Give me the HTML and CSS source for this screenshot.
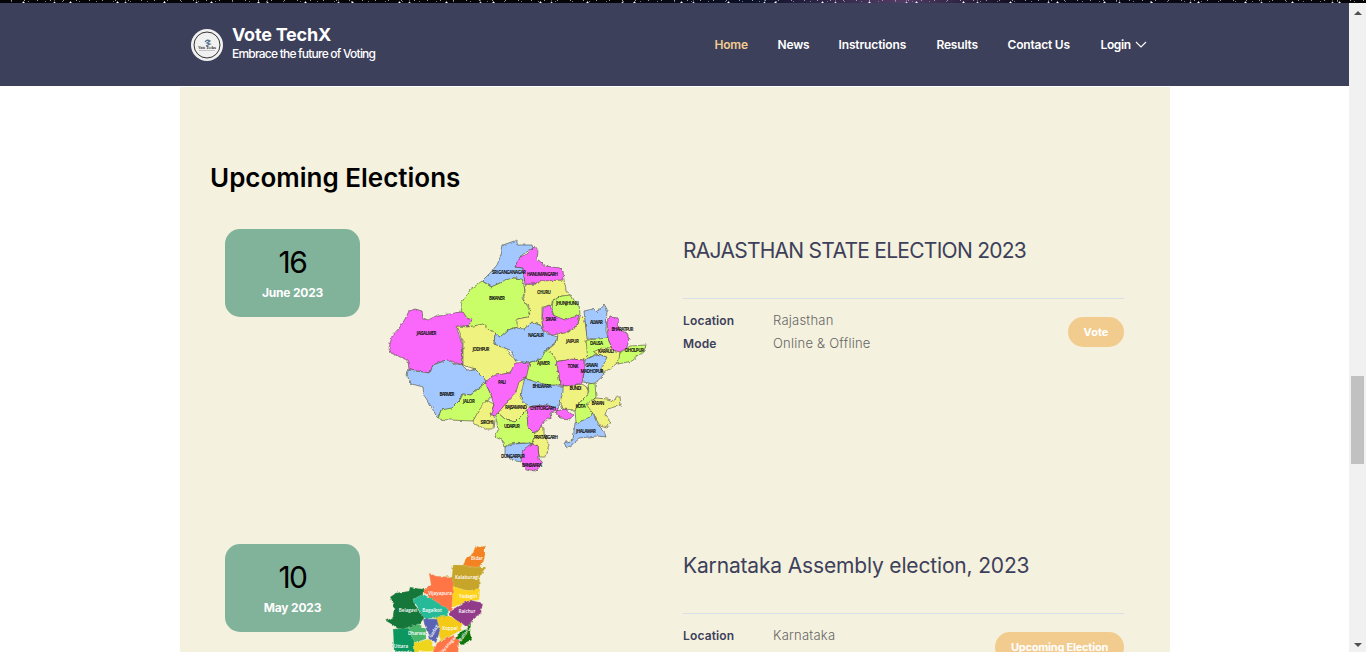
FILE: index.html
```html
<!DOCTYPE html>
<html lang="en">
<head>
<meta charset="utf-8">
<title>Vote TechX</title>
<link rel="stylesheet" href="styles.css">
</head>
<body>
<div class="stars"></div>
<div class="viewport">
<div class="page">
<header class="header">
  <a class="brand">
    <svg class="logo" viewBox="0 0 32 32"><circle cx="16" cy="16" r="16" fill="#f1f1f1"/><circle cx="16" cy="16" r="13" fill="none" stroke="#333" stroke-width="1"/><path d="M14 13q2-3 5-1l-3 2 3 1-4 2" fill="none" stroke="#56758c" stroke-width="1.3"/><text x="16" y="20" text-anchor="middle" class="logo-text">Vote Techx</text><path d="M8 21.500h16" stroke="#999" stroke-width=".5"/></svg>
    <span class="brand-text"><strong class="brand-name">Vote TechX</strong><span class="tagline">Embrace the future of Voting</span></span>
  </a>
  <nav class="nav">
    <a class="active n1">Home</a><a class="n2">News</a><a class="n3">Instructions</a><a class="n4">Results</a><a class="n5">Contact Us</a><a class="n6">Login<svg class="chev" viewBox="0 0 12 8"><path d="M1 1l5 5 5-5" fill="none" stroke="#fff" stroke-width="1.100"/></svg></a>
  </nav>
</header>
<main class="section">
  <h1 class="heading"><span>Upcoming Elections</span></h1>
  <article class="event">
    <div class="date"><span class="day">16</span><span class="month">June 2023</span></div>
    <svg class="map" viewBox="380 229 275 250">
      <defs><filter id="rough" x="-5%" y="-5%" width="110%" height="110%"><feTurbulence type="fractalNoise" baseFrequency=".22" numOctaves="2" seed="4"/><feDisplacementMap in="SourceGraphic" scale="3.500" xChannelSelector="R" yChannelSelector="G"/></filter></defs>
      <g class="districts" filter="url(#rough)">
        <path class="b" d="M482 281L490 273 497 265 501 255 503 245 517 240 517 245 532 245 533 248 522 255 515 267 523 268 525 281 517 278 513 278 500 283 492 287Z"/>
        <path class="p" d="M532 249L535 246 538 250 537 259 546 266 560 268 563 271 564 280 557 281 548 282 540 281 535 284 525 284 523 268 515 267 517 262 521 257 527 254Z"/>
        <path class="g" d="M482 281L491 287 500 283 505 280 513 278 522 279 524 285 525 292 522 298 526 304 530 310 528 317 518 319 517 327 508 330 500 337 495 334 483 325 469 327 460 312 462 302 470 290Z"/>
        <path class="p" d="M460 312L450 314 438 315 428 320 423 318 422 311 415 309 409 311 405 319 400 327 392 336 389 348 391 353 400 357 408 360 409 370 430 373 433 365 447 360 463 365 462 340 457 330 460 325 468 327 472 320 467 318 463 312Z"/>
        <path class="y" d="M457 326L468 327 483 324 495 334 494 344 505 347 510 355 516 360 515 370 500 376 488 382 480 376 475 369 463 365 463 340Z"/>
        <path class="b" d="M408 370L430 373 433 365 447 360 452 363 462 365 467 370 475 369 484 378 486 382 479 388 470 395 462 394 460 400 452 409 441 410 438 419 432 408 424 395 423 387 412 384 407 376Z"/>
        <path class="g" d="M438 419L441 410 452 408 460 400 463 394 471 395 485 383 492 396 485 404 478 414 473 421 450 420Z"/>
        <path class="y" d="M473 421L478 412 486 400 494 404 492 410 495 420 494 429 485 429 475 424Z"/>
        <path class="p" d="M485 382L495 375 510 373 515 363 530 362 529 376 522 380 515 395 505 405 497 416 490 415 494 405 491 395Z"/>
        <path class="y" d="M498 413L507 402 516 392 519 382 526 378 521 398 530 406 535 412 525 412 515 422 506 420Z"/>
        <path class="g" d="M496 417L498 413 506 420 515 422 525 412 528 410 528 425 535 434 532 445 524 443 510 444 504 447 502 440 495 437 498 430Z"/>
        <path class="b" d="M505 447L513 444 530 443 530 450 521 455 520 462 515 461 505 455Z"/>
        <path class="y" d="M535 434L540 426 544 428 544 435 549 445 546 457 539 457 538 446 532 443Z"/>
        <path class="p" d="M524 450L532 444 538 446 539 458 542 464 536 471 525 469 521 460Z"/>
        <path class="p" d="M528 410L530 405 545 405 556 406 558 411 550 413 551 418 545 421 540 428 534 433 528 427 527 415Z"/>
        <path class="p" d="M556 411L565 409 573 415 570 419 560 418 557 415Z"/>
        <path class="y" d="M563 386L582 384 588 388 588 395 580 402 575 410 563 409 560 400Z"/>
        <path class="b" d="M521 398L522 389 525 379 540 382 558 386 563 386 563 392 560 402 558 409 548 405 530 406 524 403Z"/>
        <path class="g" d="M526 378L530 362 541 359 543 352 549 348 557 360 558 370 560 385 550 385 535 382Z"/>
        <path class="b" d="M495 334L500 337 508 330 517 327 525 328 532 322 542 326 544 333 558 337 556 343 546 350 541 359 528 363 516 360 510 350 494 344Z"/>
        <path class="y" d="M525 285L535 284 540 281 564 280 566 290 571 297 562 296 553 300 551 306 542 307 542 319 543 326 532 322 524 329 517 328 517 319 528 317 530 308 523 300 525 292Z"/>
        <path class="g" d="M553 300L562 296 571 295 575 302 579 305 580 314 577 317 565 320 555 318 552 310Z"/>
        <path class="y" d="M558 333L568 332 578 325 580 316 585 318 587 335 590 345 587 360 570 360 557 361 548 350 557 342Z"/>
        <path class="p" d="M543 308L550 305 553 315 565 320 579 315 578 325 565 333 552 335 544 331 542 322Z"/>
        <path class="b" d="M584 311L593 309 597 312 604 304 607 309 606 330 608 338 600 340 587 338Z"/>
        <path class="g" d="M586 340L608 338 612 350 605 355 595 354 588 360Z"/>
        <path class="y" d="M593 352L604 347 620 350 620 361 604 373 600 374 602 365 606 357Z"/>
        <path class="p" d="M607 322L610 317 618 318 619 330 627 333 629 340 627 347 620 352 612 350 608 338Z"/>
        <path class="g" d="M620 353L630 346 646 345 644 351 632 361 618 364Z"/>
        <path class="b" d="M585 360L598 354 607 357 602 368 604 375 594 384 583 382Z"/>
        <path class="p" d="M556 362L570 359 584 360 584 372 582 383 570 386 560 385 559 374Z"/>
        <path class="g" d="M575 410L582 400 589 394 588 384 595 383 596 397 590 403 594 412 590 417 585 422 576 423Z"/>
        <path class="y" d="M586 404L596 398 607 399 615 401 617 396 620 396 621 405 607 409 605 415 611 422 607 428 600 426 594 415Z"/>
        <path class="b" d="M575 423L585 420 593 414 598 425 604 431 606 437 597 436 580 438 573 444 567 448 564 443 573 440Z"/>
      </g>
      <g class="labels">
        <text x="509" y="274" textLength="34">SRI GANGANAGAR</text><text x="542.500" y="276" textLength="31">HANUMANGARH</text><text x="497" y="300" textLength="16">BIKANER</text><text x="544" y="293.500" textLength="14">CHURU</text><text x="567.500" y="305" textLength="23">JHUNJHUNU</text><text x="551" y="321" textLength="11">SIKAR</text><text x="596.500" y="323.500" textLength="13">ALWAR</text><text x="622.500" y="330.500" textLength="22">BHARATPUR</text><text x="426.500" y="335" textLength="20">JAISALMER</text><text x="481" y="350.500" textLength="17">JODHPUR</text><text x="536" y="336.500" textLength="16">NAGAUR</text><text x="572.500" y="343" textLength="13">JAIPUR</text><text x="596.500" y="345" textLength="13">DAUSA</text><text x="606" y="353" textLength="16">KARAULI</text><text x="634.500" y="352" textLength="19">DHOLPUR</text><text x="543.500" y="365" textLength="13">AJMER</text><text x="573" y="368" textLength="11">TONK</text><text x="592" y="367" textLength="12">SAWAI</text><text x="592" y="372.500" textLength="23">MADHOPUR</text><text x="502" y="384" textLength="8">PALI</text><text x="542" y="388" textLength="19">BHILWARA</text><text x="575.500" y="390" textLength="12">BUNDI</text><text x="447" y="396" textLength="15">BARMER</text><text x="469" y="403" textLength="12">JALOR</text><text x="516" y="409" textLength="22">RAJSAMAND</text><text x="543" y="410" textLength="26">CHITTORGARH</text><text x="580.500" y="407.500" textLength="10">KOTA</text><text x="598" y="405" textLength="13">BARAN</text><text x="487" y="424" textLength="13">SIROHI</text><text x="512" y="428" textLength="16">UDAIPUR</text><text x="546" y="438.500" textLength="24">PRATABGARH</text><text x="586" y="433" textLength="20">JHALAWAR</text><text x="513" y="458" textLength="24">DUNGARPUR</text><text x="532" y="466.500" textLength="20">BANSWARA</text>
      </g>
    </svg>
    <div class="info">
      <h2 class="title"><span class="t1">RAJASTHAN STATE ELECTION 2023</span></h2>
      <div class="details">
        <dl class="facts"><dt>Location</dt><dd class="d1">Rajasthan</dd><dt class="mode">Mode</dt><dd class="d2">Online &amp; Offline</dd></dl>
        <a class="btn vote">Vote</a>
      </div>
    </div>
  </article>
  <article class="event">
    <div class="date"><span class="day">10</span><span class="month">May 2023</span></div>
    <svg class="map" viewBox="380 544 275 250">
      <g transform="translate(-1 -1)"><g class="regions" filter="url(#rough)">
        <path fill="#f58220" d="M463 568L468 558 474 554 477 546 481 548 486 547 486 557 484 564 480 569 473 569Z"/>
        <path fill="#c7a52c" d="M454 566L463 566 475 568 487 568 481 577 480 591 470 592 456 590 445 578 453 577Z"/>
        <path fill="#ff7545" d="M430 574L437 577 452 578 454 585 455 600 452 612 443 609 432 600 424 592 432 586Z"/>
        <path fill="#ffd21e" d="M454 588L470 592 481 589 480 601 471 602 453 608Z"/>
        <path fill="#14773b" d="M391 598L397 594 410 592 411 588 424 590 424 596 416 600 416 606 426 618 420 626 410 629 402 632 394 626 387 622 394 618 395 605Z"/>
        <path fill="#26ba99" d="M415 600L424 595 433 600 449 610 450 618 443 619 426 620 416 604Z"/>
        <path fill="#923a8b" d="M451 612L464 604 471 601 484 604 482 614 474 620 470 628 460 624 451 616Z"/>
        <path fill="#f4ca16" d="M436 618L450 617 462 624 463 630 455 635 442 642 438 630Z"/>
        <path fill="#5964b4" d="M424 620L438 620 441 632 437 644 430 640 427 630Z"/>
        <path fill="#46b66c" d="M409 628L420 625 427 630 427 640 415 644 408 636Z"/>
        <path fill="#07750e" d="M472 623L471 634 473 641 463 646 455 642 460 633 468 630Z"/>
        <path fill="#109760" d="M394 630L409 629 416 644 416 672 400 668 395 652Z"/>
        <path fill="#efd51d" d="M415 644L430 640 436 648 434 670 416 670Z"/>
        <path fill="#ff7545" d="M434 653L438 644 455 636 460 642 458 670 436 670Z"/>
      </g></g>
      <g class="klabels"><text x="477" y="560">Bidar</text><text x="467" y="578.500">Kalaburagi</text><text x="440" y="594.500">Vijayapura</text><text x="468" y="598">Yadagiri</text><text x="408" y="612">Belagavi</text><text x="432" y="611.500">Bagalkot</text><text x="467" y="613">Raichur</text><text x="450" y="630">Koppal</text><text x="418" y="635">Dharwad</text><text transform="translate(435 632) rotate(-60)">Gadag</text><text transform="translate(465 636) rotate(-55)">Ballari</text><text x="401" y="648">Uttara</text><text x="402" y="654">Kannada</text><text x="426" y="653.500">Haveri</text><text transform="translate(449 646) rotate(-48)">Vijayanagara</text></g>
    </svg>
    <div class="info">
      <h2 class="title"><span class="t2">Karnataka Assembly election, 2023</span></h2>
      <div class="details">
        <dl class="facts"><dt>Location</dt><dd class="d3">Karnataka</dd></dl>
        <a class="btn upcoming">Upcoming Election</a>
      </div>
    </div>
  </article>
</main>
</div>
<div class="scrollbar"><i class="up"></i><i class="thumb"></i><i class="down"></i></div>
</div>
</body>
</html>
```
FILE: styles.css
```css
*{box-sizing:border-box}
body{margin:0;height:652px;overflow:hidden;background:#fff;font-family:Inter,"Open Sans",sans-serif;color:#3d405b}
.stars{height:3px;background:
 radial-gradient(circle,#fff 0 .7px,transparent 1.300px) 0 0/47px 5px,
 radial-gradient(circle,#ddd 0 .6px,transparent 1.200px) 19px 1px/71px 3px,
 radial-gradient(circle,#aaa 0 .6px,transparent 1.200px) 11px 1px/29px 7px,
 radial-gradient(circle,#778 0 .5px,transparent 1px) 3px 0/17px 3px,
 radial-gradient(circle,#99a 0 .5px,transparent 1px) 5px 2px/13px 4px,
 linear-gradient(90deg,#050508 0 45%,#0c1028 55%,#513b65 66%,#0b0a1c 75%,#050508)}
.viewport{display:flex;height:649px}
.page{flex:1;overflow:hidden}
.header{height:83px;background:#3d405b;display:flex;justify-content:space-between;padding:0 202px 0 191px;color:#fff}
.brand{display:flex;align-items:center;gap:9px}
.logo{width:32px;height:32px}
.logo-text{font:bold 3.800px "Liberation Serif",serif;fill:#222}
.brand-text{display:flex;flex-direction:column;padding-bottom:3px}
.brand-name{font-size:18px;line-height:21px;font-weight:700;letter-spacing:-.22px}
.tagline{font-size:12px;line-height:17px;font-weight:500;letter-spacing:-.78px}
.nav{display:flex;align-items:center;gap:30px;font-size:12px;font-weight:600;white-space:nowrap}
.nav .active{color:#f2cc8f}
.n1{width:33px}.n2{width:31px}.n3{width:68px}.n4{width:41px}.n5{width:63px}.n6{width:46.500px;display:flex;align-items:center;justify-content:space-between}
.nav a{letter-spacing:-.2px}
.nav .n3{letter-spacing:-.13px}
.nav .n6{letter-spacing:-.4px}
.chev{width:12px;height:8px}
.section{width:990px;margin:1px 0 0 180px;height:800px;background:#f4f1de;padding:72px 30px 0}
.heading{margin:0;height:70px;font-size:26px;line-height:38px;font-weight:600;color:#000;letter-spacing:0}
.event{display:flex;height:315px;padding-left:15px}
.date{width:135px;height:88px;border-radius:15px;background:#81b29a;display:flex;flex-direction:column;align-items:center;padding-top:14px}
.day{font-size:30px;line-height:38px;color:#000;font-weight:400;letter-spacing:-1.500px}
.month{font-size:12px;line-height:24px;color:#fff;font-weight:700;letter-spacing:-.2px}
.map{width:275px;height:250px;margin-left:20px;flex:none}
.districts path{stroke:#4b4939;stroke-width:.6;stroke-linejoin:round}
.b{fill:#a2c8ff}.p{fill:#f968fb}.g{fill:#cafe68}.y{fill:#f0f280}
.labels text{font:bold 4.500px "Open Sans",sans-serif;fill:#111;text-anchor:middle}
.regions path{stroke:#d9dfb0;stroke-width:.3}
.klabels text{font:600 4.600px "Open Sans",sans-serif;fill:#fff;text-anchor:middle}
.info{width:441px;margin-left:28px}
.title{height:70px;border-bottom:1px solid #d8dfe9;margin:0;font-size:21px;line-height:44px;font-weight:400;white-space:nowrap}
.t1{letter-spacing:-.73px}
.t2{letter-spacing:-.16px}
.details{display:flex;justify-content:space-between;align-items:flex-start;padding-top:10px}
.facts{display:grid;grid-template-columns:90px auto;margin:0;line-height:23px;font-size:13px}
.facts dt{font-size:12px;font-weight:600;letter-spacing:.15px}
.facts dd{margin:0;color:#666;font-weight:300;letter-spacing:.23px}
.btn{height:30px;margin-top:8px;border-radius:15px;background:#f2cc8f;color:#fff;font-size:11px;font-weight:700;line-height:31px;text-align:center}
.vote{width:56px}.upcoming{width:129px;letter-spacing:-.22px}
.scrollbar{width:17px;background:#f1f1f1;display:flex;flex-direction:column;align-items:center;padding:8px 0 5px}
.up{border:4px solid transparent;border-top:0;border-bottom-color:#505050}
.down{border:4px solid transparent;border-bottom:0;border-top-color:#505050;margin-top:auto}
.thumb{width:13px;height:88px;background:#c1c1c1;margin-top:361px}
```
